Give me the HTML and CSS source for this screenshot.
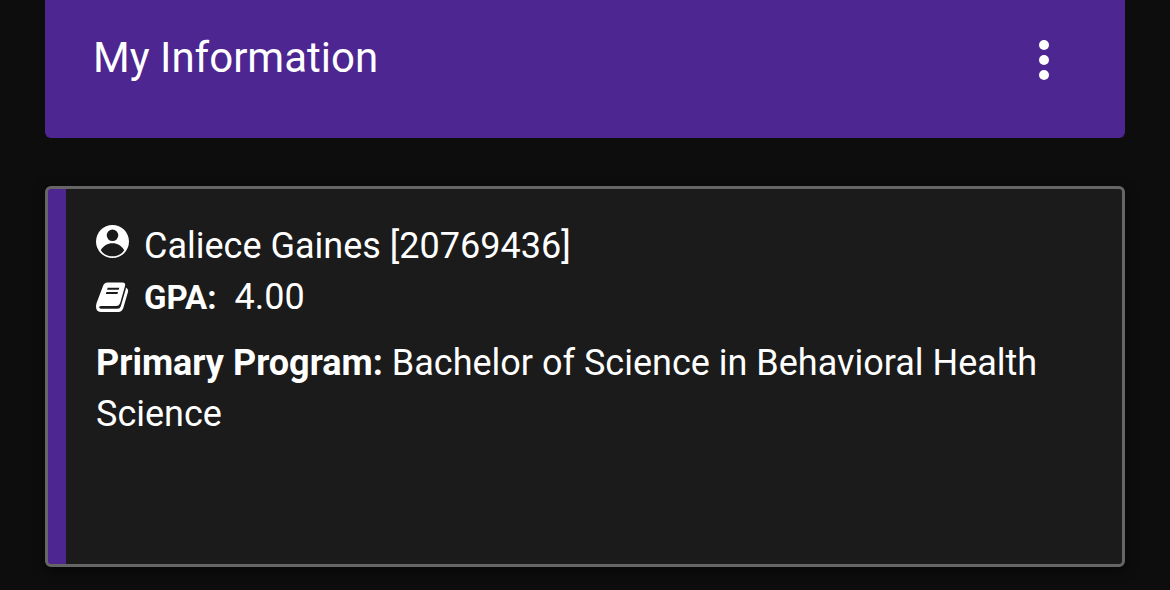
FILE: index.html
```html
<!DOCTYPE html>
<html lang="en">
<head>
<meta charset="utf-8">
<meta name="viewport" content="width=device-width, initial-scale=1">
<title>My Information</title>
<link rel="stylesheet" href="styles.css">
</head>
<body>
<main class="page">
  <header class="banner">
    <h1 class="banner-title">My Information</h1>
    <button class="menu-button" type="button" aria-label="More options">
      <svg class="menu-icon" viewBox="0 0 12 40" aria-hidden="true"><circle cx="6" cy="5" r="5"/><circle cx="6" cy="20" r="5"/><circle cx="6" cy="35" r="5"/></svg>
    </button>
  </header>
  <section class="card">
    <p class="row">
      <svg class="icon icon-user" viewBox="0 0 33 33" aria-hidden="true"><path fill-rule="evenodd" d="M16.500 0A16.500 16.500 0 1 1 16.500 33A16.500 16.500 0 1 1 16.500 0ZM16.500 4.500A5.800 5.800 0 1 0 16.500 16.100A5.800 5.800 0 1 0 16.500 4.500ZM4.800 25.200C7 29 11.500 31.300 16.500 31.300S26 29 28.200 25.200C25.500 20.500 21.500 18.200 16.500 18.200S7.500 20.500 4.800 25.200Z"/></svg>
      <span>Caliece Gaines [20769436]</span>
    </p>
    <p class="row">
      <svg class="icon" viewBox="0 0 33 33" aria-hidden="true"><path fill-rule="evenodd" d="M11.500 1.500H26.500Q30 1.500 29 5L24.300 21.500Q23.300 25 20 25H5Q2.800 25.200 3.200 26.700Q3.600 27.800 5.500 27.800H21.500Q24 27.800 24.800 25.300L29.800 8Q29.900 7.400 29.800 6.500Q32.900 8.200 31.900 11.300L27.300 27Q25.900 31 22.300 31H5.500Q0 31 0 25.500Q0 24 .6 22L7 5Q8.100 1.500 11.500 1.500ZM11.700 6.700L11.100 8.800H22.700L23.300 6.700ZM10.400 11L9.800 13.100H21.400L22 11Z"/></svg>
      <span><strong class="gpa">GPA:</strong> 4.00</span>
    </p>
    <p class="program"><strong>Primary Program:</strong> Bachelor of Science in Behavioral Health Science</p>
  </section>
</main>
</body>
</html>
```
FILE: styles.css
```css
* { box-sizing: border-box; }
body { margin: 0; background: #0d0d0d; color: #fff; font-family: Roboto, "Liberation Sans", sans-serif; font-size: 36px; line-height: 51px; }
.page { display: flex; flex-direction: column; gap: 48px; padding: 0 45px 23px; }
.banner { display: flex; align-items: flex-start; justify-content: space-between; padding: 32px 69px 55px 48px; background: #4d2691; border-radius: 0 0 6px 6px; }
.banner-title { margin: 0; font-size: 42px; font-weight: 400; line-height: 51px; }
.menu-button { display: flex; margin: 8px 0 0; padding: 0; border: 0; background: none; color: inherit; cursor: pointer; }
.menu-icon { width: 24px; height: 40px; fill: currentColor; }
.card { min-height: 381px; padding: 32px 48px; background: linear-gradient(to right, #4d2691 18px, #1b1b1b 18px); border: 3px solid #666; border-radius: 6px; box-shadow: 0 3px 12px #0008; }
.row { display: flex; align-items: center; gap: 15px; margin: 0; }
.icon { flex: none; width: 33px; height: 33px; fill: currentColor; }
.icon-user { margin-bottom: 10px; }
.gpa { margin-right: 9px; font-size: 33px; }
.program { margin: 15px 0 0; }
```
